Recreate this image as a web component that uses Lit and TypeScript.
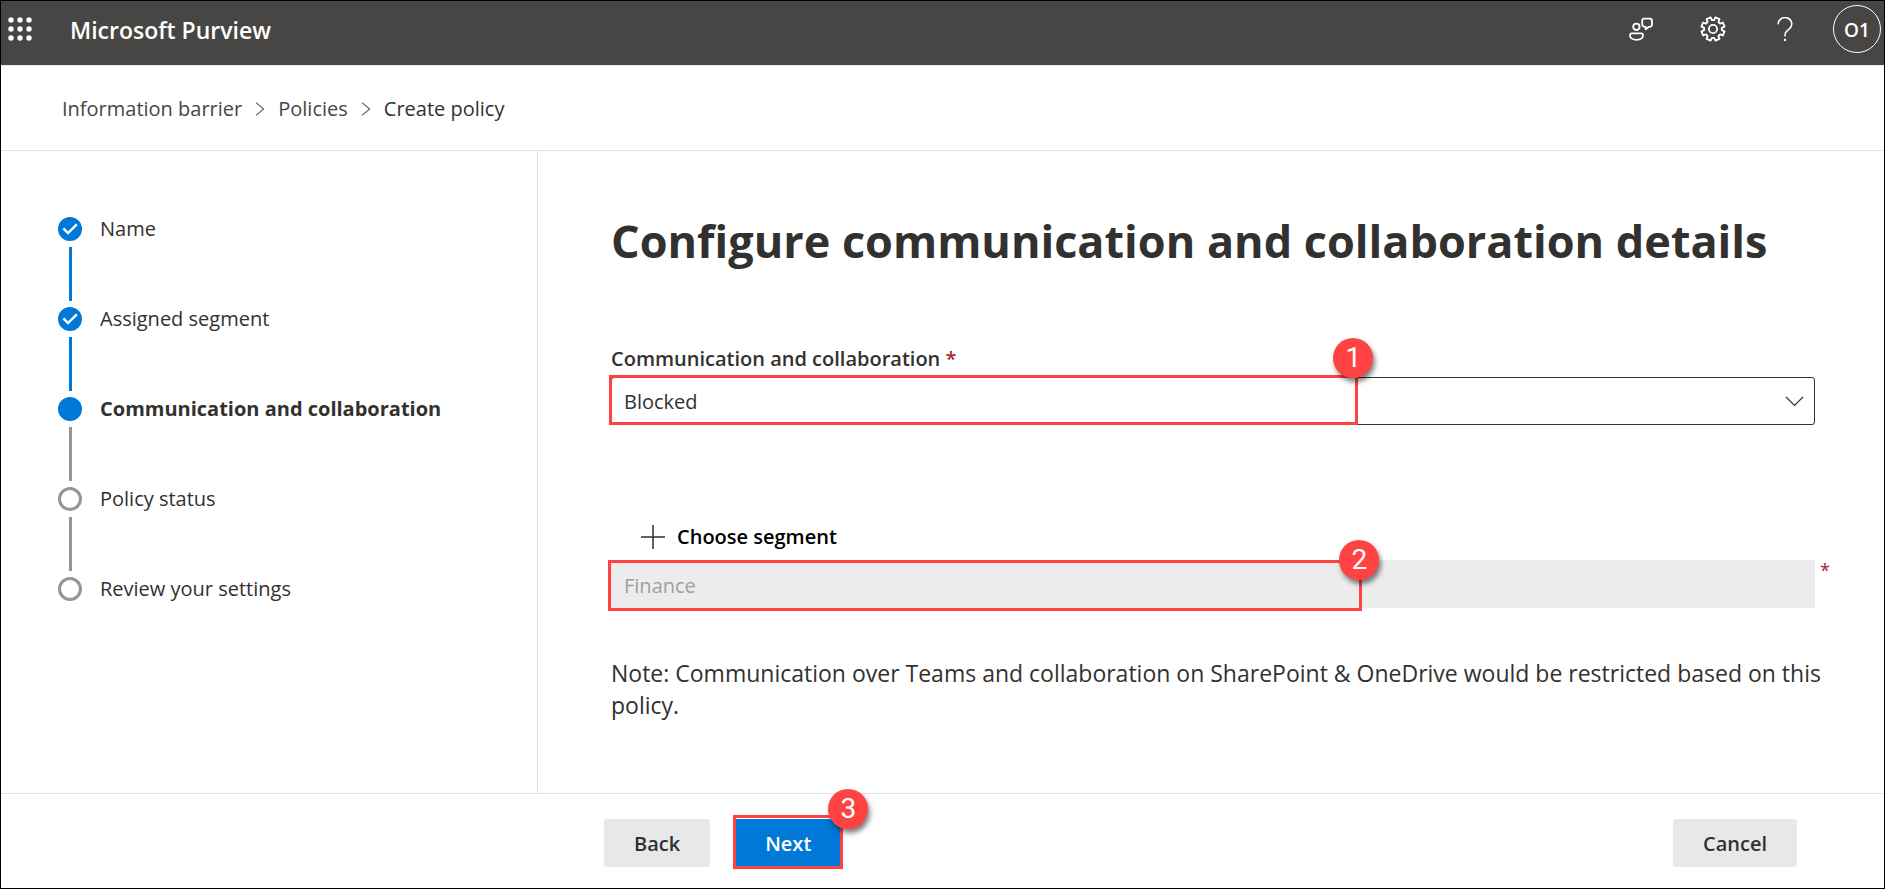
import { LitElement, html, css, svg, nothing } from "lit";
import { customElement, property, state } from "lit/decorators.js";
import { classMap } from "lit/directives/class-map.js";

type StepState = "done" | "current" | "todo";

interface Step {
  label: string;
  state: StepState;
}

const STEPS: Step[] = [
  { label: "Name", state: "done" },
  { label: "Assigned segment", state: "done" },
  { label: "Communication and collaboration", state: "current" },
  { label: "Policy status", state: "todo" },
  { label: "Review your settings", state: "todo" },
];

/** Outline of a cog with evenly spaced teeth around a 24 unit box. */
function cogOutline(teeth: number, outer: number, inner: number): string {
  const slice = (Math.PI * 2) / teeth;
  const offsets: [number, number][] = [
    [-0.34, inner],
    [-0.24, outer],
    [0.24, outer],
    [0.34, inner],
  ];
  const points: string[] = [];
  for (let i = 0; i < teeth; i++) {
    for (const [shift, radius] of offsets) {
      const angle = (i + 0.5 + shift) * slice;
      const x = 12 + Math.cos(angle) * radius;
      const y = 12 + Math.sin(angle) * radius;
      points.push(`${x.toFixed(2)} ${y.toFixed(2)}`);
    }
  }
  return `M${points.join("L")}Z`;
}

const launcherIcon = html`<svg width="24" height="24" viewBox="0 0 24 24" fill="currentColor" aria-hidden="true">
  ${[3, 12, 21].map((y) => [3, 12, 21].map((x) => svg`<circle cx=${x} cy=${y} r="2.7"></circle>`))}
</svg>`;

const feedbackIcon = html`<svg width="24" height="24" viewBox="0 0 24 24" fill="none" stroke="currentColor" stroke-width="1.8" stroke-linejoin="round" aria-hidden="true">
  <path d="M14.4 1.6h6.2a2.4 2.4 0 0 1 2.4 2.4v3.4a2.4 2.4 0 0 1-2.4 2.4h-.6l-3.3 2.6V9.8h-.6a2.6 2.6 0 0 1-2.9-2.4V3.4a1.8 1.8 0 0 1 1.2-1.8z"></path>
  <circle cx="7.4" cy="9.8" r="3.2"></circle>
  <path d="M2.8 16.4h9.4a1.8 1.8 0 0 1 1.8 1.8c0 2.8-2.6 4.7-6.4 4.7S1 21 1 18.2a1.8 1.8 0 0 1 1.8-1.8z"></path>
</svg>`;

const settingsIcon = html`<svg width="26" height="26" viewBox="0 0 24 24" fill="none" stroke="currentColor" stroke-width="1.7" stroke-linejoin="round" aria-hidden="true">
  <path d=${cogOutline(8, 10.9, 8.2)}></path>
  <circle cx="12" cy="12" r="3.8"></circle>
</svg>`;

const helpIcon = html`<svg width="16" height="24" viewBox="0 0 16 24" fill="none" stroke="currentColor" stroke-width="1.5" aria-hidden="true">
  <path d="M1.2 7.4a6.8 6.4 0 1 1 11.4 4.2l-2.8 2.5a5 5 0 0 0-1.8 3.8v1.6"></path>
  <path d="M8 21.8v2.2" stroke-width="2.2"></path>
</svg>`;

const crumbChevron = html`<svg class="chevron" width="10" height="14" viewBox="0 0 10 14" fill="none" stroke="currentColor" stroke-width="1.1" aria-hidden="true">
  <path d="M1 0.6 8.6 7 1 13.4"></path>
</svg>`;

const tickIcon = html`<svg class="tick" width="24" height="24" viewBox="0 0 24 24" fill="none" stroke="#fff" stroke-width="2.4" aria-hidden="true">
  <path d="M5.4 11.4 10 16 18.8 7.4"></path>
</svg>`;

@customElement("step-list")
export class StepList extends LitElement {
  static styles = css`
    :host {
      display: block;
    }
    .steps {
      list-style: none;
      margin: 0;
      padding: 0;
    }
    .step {
      display: grid;
      grid-template-columns: 24px 1fr;
      column-gap: 18px;
      align-items: center;
      color: #323130;
    }
    .dot {
      box-sizing: border-box;
      width: 24px;
      height: 24px;
      border-radius: 50%;
      border: 3px solid #979593;
      display: flex;
      align-items: center;
      justify-content: center;
    }
    .filled {
      border-color: #0078d7;
      background: #0078d7;
    }
    .tick {
      flex: none;
    }
    .label {
      font-size: 20px;
      line-height: 24px;
    }
    .current {
      font-weight: 700;
    }
    .link {
      width: 3px;
      height: 54px;
      margin: 6px 0;
      justify-self: center;
      background: #979593;
    }
    .passed {
      background: #0078d7;
    }
  `;

  @property({ attribute: false }) steps: Step[] = [];

  render() {
    return html`<ol class="steps">
      ${this.steps.map(
        (step, i) => html`<li class="step" aria-current=${step.state === "current" ? "step" : nothing}>
          <span class=${classMap({ dot: true, filled: step.state !== "todo" })}>
            ${step.state === "done" ? tickIcon : nothing}
          </span>
          <span class=${classMap({ label: true, current: step.state === "current" })}>${step.label}</span>
          ${i < this.steps.length - 1
            ? html`<span class=${classMap({ link: true, passed: step.state === "done" })}></span>`
            : nothing}
        </li>`
      )}
    </ol>`;
  }
}

@customElement("call-out")
export class CallOut extends LitElement {
  static styles = css`
    :host {
      display: block;
      position: absolute;
      box-sizing: border-box;
      border: 3px solid #ff4343;
      pointer-events: none;
    }
    .badge {
      position: absolute;
      top: -40px;
      right: -18px;
      width: 40px;
      height: 40px;
      border-radius: 50%;
      background: #ff4343;
      color: #fff;
      font: 28px/40px Roboto, sans-serif;
      text-align: center;
      box-shadow: 2px 4px 5px rgba(0, 0, 0, 0.5);
    }
    :host([centered]) .badge {
      top: -23px;
      right: -20px;
    }
    :host([outside]) .badge {
      top: -29px;
      right: -28px;
    }
  `;

  @property({ type: Number }) number = 1;

  render() {
    return html`<span class="badge">${this.number}</span>`;
  }
}

@customElement("app-root")
export class AppRoot extends LitElement {
  static styles = css`
    :host {
      display: flex;
      flex-direction: column;
      box-sizing: border-box;
      min-height: 100vh;
      border: 1px solid #000;
      background: #fff;
      color: #323130;
      font-family: "Segoe UI", "Open Sans", "Noto Sans", sans-serif;
      font-size: 20px;
    }
    button,
    select,
    input {
      font: inherit;
      color: inherit;
      margin: 0;
    }
    .topbar {
      display: flex;
      align-items: center;
      height: 65px;
      box-sizing: border-box;
      padding: 0 3px 8px 7px;
      background: #484644;
      color: #fff;
      border-bottom: 1px solid #edebe9;
    }
    .icon-button {
      display: flex;
      align-items: center;
      justify-content: center;
      padding: 0;
      border: 0;
      background: none;
      cursor: pointer;
      width: 24px;
      height: 24px;
    }
    .icon-button svg {
      flex: none;
    }
    .brand {
      flex: 1;
      margin-left: 38px;
      padding-top: 2px;
      font-size: 23px;
      line-height: 32px;
      font-weight: 600;
    }
    .tools {
      display: flex;
      align-items: center;
      gap: 48px;
    }
    .avatar {
      width: 48px;
      height: 48px;
      margin-left: -12px;
      padding: 2px 0 0;
      border: 1px solid #fff;
      border-radius: 50%;
      background: none;
      font-size: 19px;
      font-weight: 600;
      cursor: pointer;
    }
    .crumbs {
      display: flex;
      align-items: center;
      gap: 13px;
      padding: 29px 61px 27px;
      border-bottom: 1px solid #e1e1e1;
      line-height: 28px;
    }
    .crumb {
      color: #484644;
      text-decoration: none;
    }
    .here {
      color: #323130;
    }
    .chevron {
      color: #605e5c;
    }
    .body {
      flex: 1;
      display: grid;
      grid-template-columns: minmax(400px, 537px) 1fr;
    }
    .side {
      padding: 66px 32px 40px 57px;
      border-right: 1px solid #e1e1e1;
      box-sizing: border-box;
    }
    .main {
      padding: 58px 48px 40px 73px;
      min-width: 0;
    }
    .title {
      margin: 0 0 72px;
      font-size: 45px;
      line-height: 64px;
      font-weight: 700;
    }
    .caption {
      display: block;
      font-weight: 600;
      line-height: 28px;
      margin-bottom: 4px;
    }
    .required {
      color: #a4262c;
    }
    .field {
      position: relative;
      margin-right: 21px;
    }
    .select {
      display: block;
      width: 100%;
      height: 48px;
      box-sizing: border-box;
      padding: 0 48px 0 12px;
      border: 1px solid #323130;
      border-radius: 3px;
      background: #fff;
      appearance: none;
    }
    .arrow {
      position: absolute;
      right: 11px;
      top: 19px;
      pointer-events: none;
    }
    .outline {
      left: -2px;
      top: -2px;
      bottom: 0;
      width: calc(62% + 3px);
    }
    .outline-segment {
      left: -3px;
      top: 0;
      bottom: -3px;
      width: calc(62% + 8px);
    }
    .choose {
      display: flex;
      align-items: center;
      gap: 12px;
      margin: 92px 0 4px 30px;
      height: 39px;
      padding: 0;
      border: 0;
      background: none;
      color: #000;
      font-weight: 600;
      cursor: pointer;
    }
    .input {
      display: block;
      width: 100%;
      height: 48px;
      box-sizing: border-box;
      padding: 2px 13px 0;
      border: 0;
      border-radius: 3px;
      background: #ececec;
      color: #a19f9d;
    }
    .after {
      position: absolute;
      left: 100%;
      top: 0;
      padding-left: 5px;
      font-size: 18px;
      line-height: 20px;
    }
    .note {
      margin: 49px 0 0;
      font-size: 23px;
      line-height: 32px;
    }
    .footer {
      display: flex;
      align-items: center;
      gap: 26px;
      padding: 25px 87px 21px 603px;
      border-top: 1px solid #e1e1e1;
    }
    .button {
      position: relative;
      height: 48px;
      padding: 0 30px;
      border: 0;
      border-radius: 3px;
      background: #e8e8e8;
      font-weight: 600;
      cursor: pointer;
    }
    .primary {
      padding: 0 29px;
      background: #0078d7;
      color: #fff;
      border-radius: 0;
    }
    .outline-next {
      left: -3px;
      right: -3px;
      top: -4px;
      bottom: -2px;
    }
    .cancel {
      margin-left: auto;
    }
  `;

  @state() private mode = "Blocked";

  private onMode(event: Event) {
    this.mode = (event.target as HTMLSelectElement).value;
  }

  render() {
    return html`
      <header class="topbar">
        <button class="icon-button" aria-label="App launcher">${launcherIcon}</button>
        <span class="brand">Microsoft Purview</span>
        <div class="tools">
          <button class="icon-button" aria-label="Feedback">${feedbackIcon}</button>
          <button class="icon-button" aria-label="Settings">${settingsIcon}</button>
          <button class="icon-button" aria-label="Help">${helpIcon}</button>
          <button class="avatar" aria-label="Account">O1</button>
        </div>
      </header>
      <nav class="crumbs" aria-label="Breadcrumb">
        <a class="crumb" href="#barrier">Information barrier</a>
        ${crumbChevron}
        <a class="crumb" href="#policies">Policies</a>
        ${crumbChevron}
        <a class="crumb here" href="#create" aria-current="page">Create policy</a>
      </nav>
      <div class="body">
        <aside class="side"><step-list .steps=${STEPS}></step-list></aside>
        <main class="main">
          <h1 class="title">Configure communication and collaboration details</h1>
          <label class="caption" for="mode">Communication and collaboration <span class="required">*</span></label>
          <div class="field">
            <select class="select" id="mode" .value=${this.mode} @change=${this.onMode}>
              <option value="Blocked">Blocked</option>
              <option value="Allowed">Allowed</option>
            </select>
            <svg class="arrow" width="19" height="11" viewBox="0 0 19 11" fill="none" stroke="#323130" stroke-width="1.2" aria-hidden="true">
              <path d="M1 1 9.5 9.5 18 1"></path>
            </svg>
            <call-out class="outline" number="1"></call-out>
          </div>
          <button class="choose">
            <svg width="24" height="24" viewBox="0 0 24 24" fill="none" stroke="#323130" stroke-width="1.5" aria-hidden="true">
              <path d="M12 0v24M0 12h24"></path>
            </svg>
            <span>Choose segment</span>
          </button>
          <div class="field">
            <input class="input" type="text" aria-label="Segment" value="Finance" disabled />
            <span class="after required">*</span>
            <call-out class="outline-segment" number="2" centered></call-out>
          </div>
          <p class="note">
            Note: Communication over Teams and collaboration on SharePoint &amp; OneDrive would be restricted based on
            this policy.
          </p>
        </main>
      </div>
      <footer class="footer">
        <button class="button">Back</button>
        <button class="button primary">Next<call-out class="outline-next" number="3" outside></call-out></button>
        <button class="button cancel">Cancel</button>
      </footer>
    `;
  }
}
